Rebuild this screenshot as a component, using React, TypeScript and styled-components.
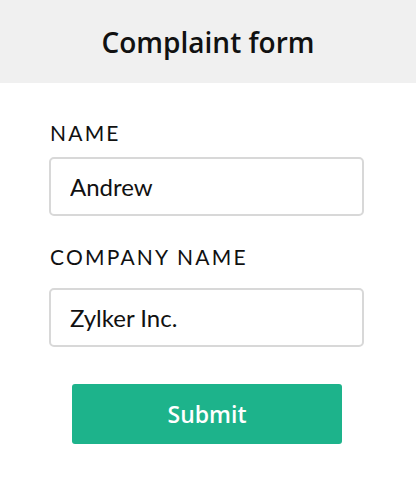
import React from "react";
import styled, { createGlobalStyle } from "styled-components";

const Global = createGlobalStyle`
  html, body { margin: 0; padding: 0; background: #ffffff; }
  body { font-family: "Lato", "Noto Sans", sans-serif; color: #111; }
  * { box-sizing: border-box; }
`;

const Page = styled.div`
  width: 416px;
  height: 496px;
  display: flex;
  flex-direction: column;
  background: #ffffff;
`;

const Header = styled.header`
  height: 83px;
  background: #f0f0f0;
  display: flex;
  align-items: center;
  justify-content: center;
`;

const Title = styled.h1`
  margin: 0;
  font-family: "Open Sans", "Lato", sans-serif;
  font-size: 28px;
  font-weight: 600;
  color: #111;
`;

const Form = styled.form`
  display: flex;
  flex-direction: column;
  padding: 38px 52px 0 49px;
`;

const Field = styled.div<{ $after: number }>`
  display: flex;
  flex-direction: column;
  margin-bottom: ${(p) => p.$after}px;
`;

const Label = styled.label<{ $space: number }>`
  font-size: 21px;
  letter-spacing: 2.2px;
  color: #111;
  padding-left: 1px;
  line-height: 24px;
  margin-bottom: ${(p) => p.$space}px;
`;

const Input = styled.input`
  width: 315px;
  height: 59px;
  border: 2px solid #d8d8d8;
  border-radius: 5px;
  padding: 0 19px;
  font-family: "Lato", "Noto Sans", sans-serif;
  font-size: 24px;
  color: #111;
  background: #fff;
  outline: none;
`;

const Submit = styled.button`
  align-self: flex-start;
  margin: 37px 0 0 23px;
  width: 270px;
  height: 60px;
  border: none;
  border-radius: 3px;
  background: #1db38b;
  color: #fff;
  font-family: "Open Sans", "Lato", sans-serif;
  font-size: 23px;
  font-weight: 600;
  cursor: pointer;
`;

export default function App() {
  return (
    <>
      <Global />
      <Page>
        <Header>
          <Title>Complaint form</Title>
        </Header>
        <Form onSubmit={(e) => e.preventDefault()}>
          <Field $after={29}>
            <Label $space={12}>NAME</Label>
            <Input defaultValue="Andrew" />
          </Field>
          <Field $after={0}>
            <Label $space={19}>COMPANY NAME</Label>
            <Input defaultValue="Zylker Inc." />
          </Field>
          <Submit type="submit">Submit</Submit>
        </Form>
      </Page>
    </>
  );
}
